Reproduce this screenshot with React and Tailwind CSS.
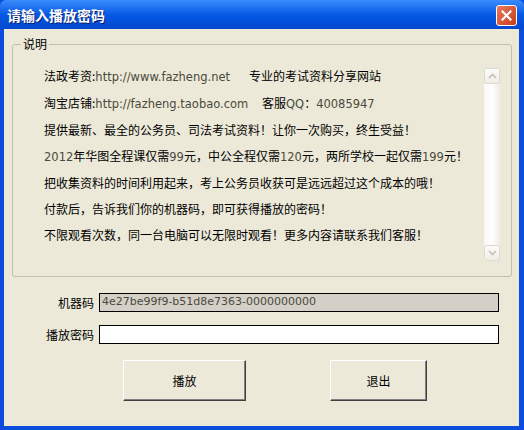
import React from 'react';

const cjk = '"Noto Sans CJK SC", "DejaVu Sans", sans-serif';

// latin runs inside the description are drawn a touch lighter, like Tahoma on XP
const L = ({ children }) => (
    <span className="text-[#4a4a3c] text-[11.5px]" style={{ fontFamily: '"DejaVu Sans", sans-serif' }}>
        {children}
    </span>
);

const lines = [
    null,
    null,
    <>提供最新、最全的公务员、司法考试资料！让你一次购买，终生受益！</>,
    <><L>2012</L>年华图全程课仅需<L>99</L>元，中公全程仅需<L>120</L>元，两所学校一起仅需<L>199</L>元！</>,
    <>把收集资料的时间利用起来，考上公务员收获可是远远超过这个成本的哦！</>,
    <>付款后，告诉我们你的机器码，即可获得播放的密码！</>,
    <>不限观看次数，同一台电脑可以无限时观看！更多内容请联系我们客服！</>,
];

const Chevron = ({ up }) => (
    <svg width="9" height="6" viewBox="0 0 9 6">
        <path d={up ? 'M1 5 L4.5 1.5 L8 5' : 'M1 1 L4.5 4.5 L8 1'} fill="none" stroke="#c3c1b4" strokeWidth="1.6" />
    </svg>
);

const ArrowBtn = ({ up }) => (
    <div className="w-[16px] h-[16px] rounded-[2px] border border-[#dcdad0] bg-gradient-to-b from-[#fbfbf8] to-[#efeee6] flex items-center justify-center">
        <Chevron up={up} />
    </div>
);

const Button = ({ label, width }) => (
    <button
        className={`${width} h-[41px] bg-[#ece9d8] border border-t-white border-l-white border-r-[#404040] border-b-[#404040] shadow-[inset_-1px_-1px_0_#808080] text-[12px] text-black flex items-center justify-center`}
        style={{ fontFamily: cjk }}
    >
        {label}
    </button>
);

export default function App() {
    return (
        <div className="w-[524px] h-[430px] flex flex-col bg-[#0b4ddf] overflow-hidden" style={{ fontFamily: cjk }}>
            {/* title bar */}
            <div className="h-[29px] flex items-center justify-between pl-[7px] pr-[7px] bg-gradient-to-b from-[#3a8cfb] via-[#0559e6] to-[#0347d0] rounded-t-[6px]">
                <span className="text-white font-bold text-[14px] leading-none [text-shadow:1px_1px_0_#0a1e6e]">请输入播放密码</span>
                <div className="w-[21px] h-[21px] mt-[2px] rounded-[3px] border border-white bg-gradient-to-br from-[#e8785c] to-[#c93a16] flex items-center justify-center">
                    <svg width="11" height="11" viewBox="0 0 11 11">
                        <path d="M1.5 1.5 L9.5 9.5 M9.5 1.5 L1.5 9.5" stroke="white" strokeWidth="2.2" strokeLinecap="square" />
                    </svg>
                </div>
            </div>

            {/* body */}
            <div className="flex-1 ml-[4px] mr-[5px] mb-[4px] bg-[#ece9d8] flex flex-col">
                <div className="relative mt-[15px] ml-[8px] w-[500px] h-[233px] border border-[#c2bfad] rounded-[3px] flex">
                    <span className="absolute left-[8px] top-[-9px] px-[2px] bg-[#ece9d8] text-[12px] leading-[16px] text-black">说明</span>

                    <div className="flex-1 pl-[31px] pt-[18px] text-[12px] leading-[26px] text-black whitespace-nowrap">
                        <div className="flex">
                            <span className="w-[205px]">法政考资:<L>http://www.fazheng.net</L></span>
                            <span>专业的考试资料分享网站</span>
                        </div>
                        <div className="flex">
                            <span className="w-[218px]">淘宝店铺:<L>http://fazheng.taobao.com</L></span>
                            <span>客服<L>QQ</L>：<L>40085947</L></span>
                        </div>
                        {lines.slice(2).map((l, i) => (
                            <div key={i}>{l}</div>
                        ))}
                    </div>

                    {/* disabled scrollbar */}
                    <div className="w-[16px] h-[193px] mt-[23px] mr-[11px] flex flex-col bg-gradient-to-r from-[#f7f7f3] via-white to-[#eeede5]">
                        <ArrowBtn up />
                        <div className="flex-1" />
                        <ArrowBtn />
                    </div>
                </div>

                <div className="mt-[16px] flex items-center">
                    <span className="w-[90px] text-right text-[12px] text-black">机器码</span>
                    <div
                        className="ml-[5px] w-[400px] h-[19px] border border-black bg-[#d4d0c8] flex items-center pl-[2px] text-[11px] text-[#4a4a3c]"
                        style={{ fontFamily: '"DejaVu Sans", sans-serif' }}
                    >
                        4e27be99f9-b51d8e7363-0000000000
                    </div>
                </div>

                <div className="mt-[13px] flex items-center">
                    <span className="w-[90px] text-right text-[12px] text-black">播放密码</span>
                    <input className="ml-[5px] w-[400px] h-[19px] border border-black bg-white outline-none" />
                </div>

                <div className="mt-[16px] flex">
                    <div className="ml-[119px]">
                        <Button label="播放" width="w-[123px]" />
                    </div>
                    <div className="ml-[84px]">
                        <Button label="退出" width="w-[97px]" />
                    </div>
                </div>
            </div>
        </div>
    );
}
